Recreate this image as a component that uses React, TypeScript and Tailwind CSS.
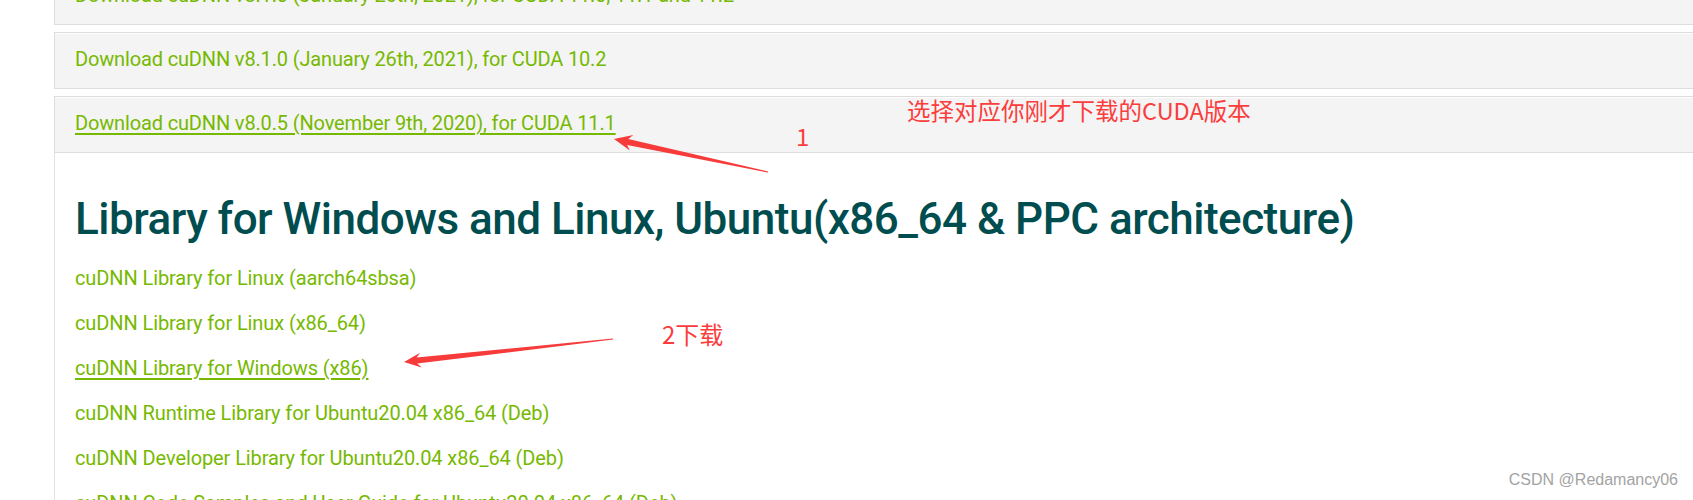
import React from 'react';

type Pt = [number, number];

// screenshot-tool style arrow: thin tail widening toward a notched head
function arrowPoints(tip: Pt, tail: Pt, head = 18, wing = 8, neck = 3) {
  const dx = tail[0] - tip[0];
  const dy = tail[1] - tip[1];
  const len = Math.hypot(dx, dy);
  const ux = dx / len;
  const uy = dy / len;
  const nx = -uy;
  const ny = ux;
  const at = (d: number, w: number) =>
    `${(tip[0] + ux * d + nx * w).toFixed(1)},${(tip[1] + uy * d + ny * w).toFixed(1)}`;
  return [
    at(0, 0),
    at(head, wing),
    at(head - 4, neck),
    at(len, 0.6),
    at(len, -0.6),
    at(head - 4, -neck),
    at(head, -wing),
  ].join(' ');
}

const panels = [
  { label: 'Download cuDNN v8.1.0 (January 26th, 2021), for CUDA 11.0, 11.1 and 11.2', active: false },
  { label: 'Download cuDNN v8.1.0 (January 26th, 2021), for CUDA 10.2', active: false },
  { label: 'Download cuDNN v8.0.5 (November 9th, 2020), for CUDA 11.1', active: true },
];

const libraries = [
  { label: 'cuDNN Library for Linux (aarch64sbsa)', active: false },
  { label: 'cuDNN Library for Linux (x86_64)', active: false },
  { label: 'cuDNN Library for Windows (x86)', active: true },
  { label: 'cuDNN Runtime Library for Ubuntu20.04 x86_64 (Deb)', active: false },
  { label: 'cuDNN Developer Library for Ubuntu20.04 x86_64 (Deb)', active: false },
  { label: 'cuDNN Code Samples and User Guide for Ubuntu20.04 x86_64 (Deb)', active: false },
];

const linkClass = (active: boolean) =>
  active
    ? 'text-[#76b900] underline decoration-[#76b900] decoration-2 underline-offset-[3px]'
    : 'text-[#76b900]';

export default function App() {
  return (
    <div className="relative h-[500px] w-full overflow-hidden bg-white pl-[54px] font-['Roboto','Liberation_Sans',sans-serif]">
      <div className="-mt-[32px] flex flex-col gap-[7px]">
        {panels.map((p) => (
          <div
            key={p.label}
            className="flex h-[57px] items-center border border-r-0 border-[#dddddd] bg-[#f4f4f4] pb-[3px] pl-5 shadow-[inset_0_1px_0_#ffffff]"
          >
            <a className={`text-[20px] tracking-[-0.15px] ${linkClass(p.active)}`}>{p.label}</a>
          </div>
        ))}
      </div>

      <div className="h-full border-l border-[#e2e2e2] pl-5 pt-[40px]">
        <h2 className="text-[44px] font-medium leading-[52px] tracking-[-0.5px] text-[#004d4f]">
          Library for Windows and Linux, Ubuntu(x86_64 &amp; PPC architecture)
        </h2>
        <ul className="mt-[11px] flex flex-col">
          {libraries.map((l) => (
            <li key={l.label} className="h-[45px] text-[20px] leading-[45px] tracking-[-0.1px]">
              <a className={linkClass(l.active)}>{l.label}</a>
            </li>
          ))}
        </ul>
      </div>

      {/* red annotations drawn over the page */}
      <svg className="pointer-events-none absolute inset-0 h-full w-full" width="1693" height="500">
        <polygon points={arrowPoints([614, 139], [768, 172])} fill="#f73b3b" />
        <polygon points={arrowPoints([404, 362], [613, 339], 17, 7.5, 3)} fill="#f73b3b" />
      </svg>
      <div className="pointer-events-none absolute left-[907px] top-[99px] whitespace-nowrap font-['Noto_Sans_CJK_SC',sans-serif] text-[23.5px] leading-none text-[#fb3d3d]">
        选择对应你刚才下载的CUDA版本
      </div>
      <div className="pointer-events-none absolute left-[796px] top-[124px] font-['Noto_Sans_CJK_SC',sans-serif] text-[24px] leading-none text-[#fb3d3d]">
        1
      </div>
      <div className="pointer-events-none absolute left-[662px] top-[322px] whitespace-nowrap font-['Noto_Sans_CJK_SC',sans-serif] text-[24px] leading-none text-[#fb3d3d]">
        2下载
      </div>
      <div className="pointer-events-none absolute right-[15px] top-[472px] font-['Liberation_Sans',sans-serif] text-[16px] leading-none text-[#a3a3a3]">
        CSDN @Redamancy06
      </div>
    </div>
  );
}
